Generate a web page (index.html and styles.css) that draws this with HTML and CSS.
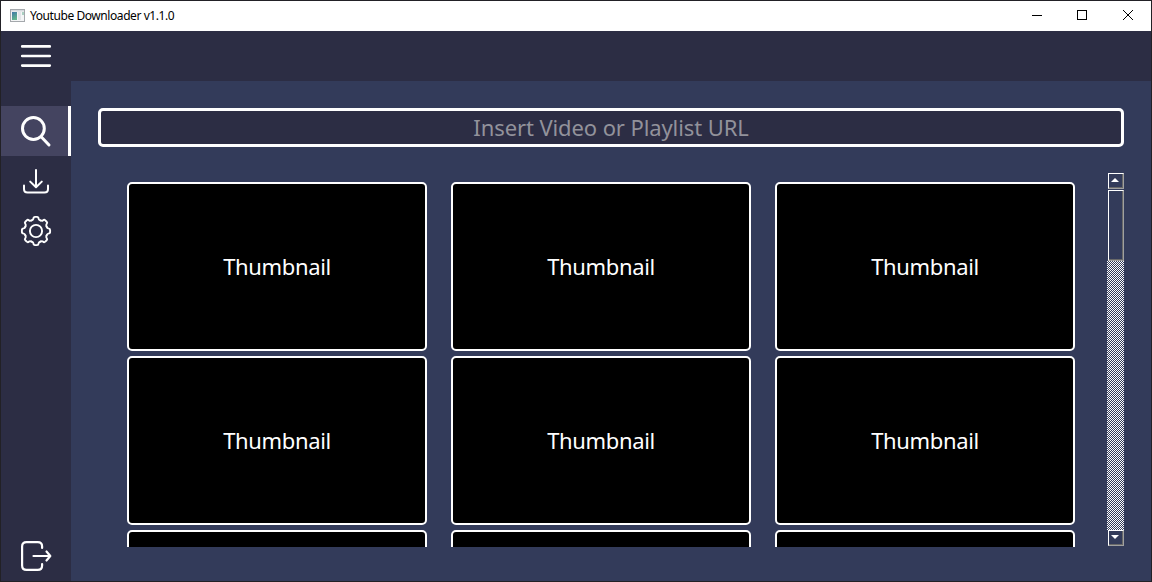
FILE: index.html
```html
<!DOCTYPE html>
<html lang="en">
<head>
<meta charset="utf-8">
<title>Youtube Downloader v1.1.0</title>
<link rel="stylesheet" href="styles.css">
</head>
<body>
<div class="window">
  <header class="titlebar">
    <svg class="app-icon" width="16" height="14" viewBox="0 0 16 14">
      <defs><linearGradient id="pane" x1="0" y1="0" x2="0.4" y2="1"><stop offset="0" stop-color="#3f77a8"/><stop offset="1" stop-color="#62b48c"/></linearGradient></defs>
      <rect x="1.5" y=".5" width="14" height="12" fill="#f4f5f6" stroke="#a4a8ac"/>
      <rect x="2" y="1" width="13" height="1.5" fill="#d5d9dd"/>
      <rect x="3" y="3" width="5" height="8" fill="url(#pane)"/>
      <rect x="9" y="3" width="3" height="8" fill="#e2e5e8"/>
      <rect x="13" y="3" width="2" height="3" fill="#a9cfc1"/>
    </svg>
    <span class="title">Youtube Downloader v1.1.0</span>
    <svg class="controls" width="110" height="12" viewBox="0 0 110 12" fill="none" stroke="#000">
      <path d="M0 5.5H10"/><rect x="45.5" y=".5" width="9" height="9"/>
      <path d="M91 0L101 10M101 0L91 10"/>
    </svg>
  </header>
  <div class="topbar">
    <svg width="70" height="50" viewBox="0 0 70 50" fill="none" stroke="#fff" stroke-width="2.6" stroke-linecap="round"><path d="M21.2 15.4H48.8M21.2 25H48.8M21.2 34.6H48.8"/></svg>
  </div>
  <div class="body">
    <nav class="sidebar">
      <div class="item active">
        <svg width="70" height="50" viewBox="0 0 70 50" fill="none" stroke="#fff" stroke-width="3" stroke-linecap="round"><circle cx="32.4" cy="22.5" r="10.9"/><path d="M40.4 31L48 39"/></svg>
      </div>
      <div class="item">
        <svg width="70" height="50" viewBox="0 0 70 50" fill="none" stroke="#fff" stroke-width="2" stroke-linecap="round" stroke-linejoin="round"><path d="M35 14V31M29.2 25.6L35 31.3L40.8 25.6M23 29.5V33Q23 36.5 26.5 36.5H43.5Q47 36.5 47 33V29.5"/></svg>
      </div>
      <div class="item">
        <svg width="70" height="50" viewBox="-35 -25 70 50" fill="none" stroke="#fff" stroke-width="1.9" stroke-linecap="round">
          <defs><path id="tooth" d="M-4.4-10.6C-3.6-10.9-2.7-11.2-2.6-12.3C-2.5-13.7-2-14.1-1-14.1H1C2-14.1 2.5-13.7 2.6-12.3C2.7-11.2 3.6-10.9 4.4-10.6"/></defs>
          <circle r="6.1"/>
          <use href="#tooth"/><use href="#tooth" transform="rotate(45)"/><use href="#tooth" transform="rotate(90)"/><use href="#tooth" transform="rotate(135)"/><use href="#tooth" transform="rotate(180)"/><use href="#tooth" transform="rotate(225)"/><use href="#tooth" transform="rotate(270)"/><use href="#tooth" transform="rotate(315)"/>
        </svg>
      </div>
      <div class="item exit">
        <svg width="70" height="50" viewBox="0 0 70 50" fill="none" stroke="#fff" stroke-width="2.2" stroke-linecap="round" stroke-linejoin="round"><path d="M41.1 17V15.5Q41.1 11.1 36.7 11.1H25.5Q21.1 11.1 21.1 15.5V34.5Q21.1 38.9 25.5 38.9H36.7Q41.1 38.9 41.1 34.5V33M32.5 25H49M45.5 20.5L49.3 25L45.5 29.5"/></svg>
      </div>
    </nav>
    <main class="content">
      <div class="url"><span>Insert Video or Playlist URL</span></div>
      <div class="results">
        <div class="grid">
          <div class="card"><span>Thumbnail</span></div><div class="card"><span>Thumbnail</span></div><div class="card"><span>Thumbnail</span></div>
          <div class="card"><span>Thumbnail</span></div><div class="card"><span>Thumbnail</span></div><div class="card"><span>Thumbnail</span></div>
          <div class="card"></div><div class="card"></div><div class="card"></div>
        </div>
        <div class="scrollbar">
          <div class="bevel arrow"><svg width="8" height="4" viewBox="0 0 8 4"><path d="M0 4L4 0L8 4Z" fill="#fff"/></svg></div>
          <div class="bevel thumb"></div>
          <div class="trough"></div>
          <div class="bevel arrow"><svg width="8" height="4" viewBox="0 0 8 4"><path d="M0 0L4 4L8 0Z" fill="#fff"/></svg></div>
        </div>
      </div>
    </main>
  </div>
</div>
</body>
</html>
```
FILE: styles.css
```css
* { box-sizing: border-box; }
body { margin: 0; overflow: hidden; }
svg { display: block; flex: none; }
.window { width: 1152px; height: 582px; border: 1px solid #222126; display: flex; flex-direction: column; background: #333b5a; }
.titlebar { height: 30px; flex: none; display: flex; align-items: center; background: #fff; padding-left: 8px; padding-right: 9px; }
.title { margin-left: 5px; padding-bottom: 1px; font: 12px "Noto Sans", sans-serif; letter-spacing: -0.43px; color: #000; white-space: nowrap; }
.controls { margin-left: auto; }
.topbar { height: 50px; flex: none; background: #2c2d44; }
.body { flex: 1; display: flex; min-height: 0; }
.sidebar { width: 70px; padding-top: 25px; background: #2c2d44; display: flex; flex-direction: column; }
.item { height: 50px; flex: none; }
.active { background: #444460; box-shadow: inset -3px 0 #fff; }
.exit { margin-top: auto; }
.content { flex: 1; padding: 27px 27px 0; font: 22px "Noto Sans", sans-serif; letter-spacing: -0.1px; }
.url { height: 39px; padding-bottom: 2px; border: 3px solid #fff; border-radius: 5px; background: #2c2d44; color: #92929b; display: flex; align-items: center; justify-content: center; white-space: nowrap; }
.results { margin-top: 26px; height: 374px; display: flex; justify-content: space-between; overflow: hidden; }
.grid { padding: 9px 0 0 29px; display: grid; grid-template-columns: repeat(3, 300px); grid-auto-rows: 169px; gap: 5px 24px; }
.card { padding-bottom: 2px; border: 2px solid #fff; border-radius: 5px; background: #000; color: #fff; letter-spacing: -0.35px; display: flex; align-items: center; justify-content: center; }
.scrollbar { width: 17px; height: 374px; display: flex; flex-direction: column; }
.bevel { margin-left: 1px; width: 16px; border: 1px solid #fff; border-right-color: #a0a0a0; border-bottom-color: #a0a0a0; box-shadow: inset -1px -1px #696969; flex: none; }
.arrow { height: 16px; padding: 0 2px 2px 0; display: flex; align-items: center; justify-content: center; }
.thumb { margin-top: 1px; height: 71px; }
.trough { flex: 1; background: repeating-conic-gradient(#333b5a 0 25%, #fff 0 50%) 0 0 / 2px 2px; }
.trough + .arrow { margin-bottom: 1px; }
```
